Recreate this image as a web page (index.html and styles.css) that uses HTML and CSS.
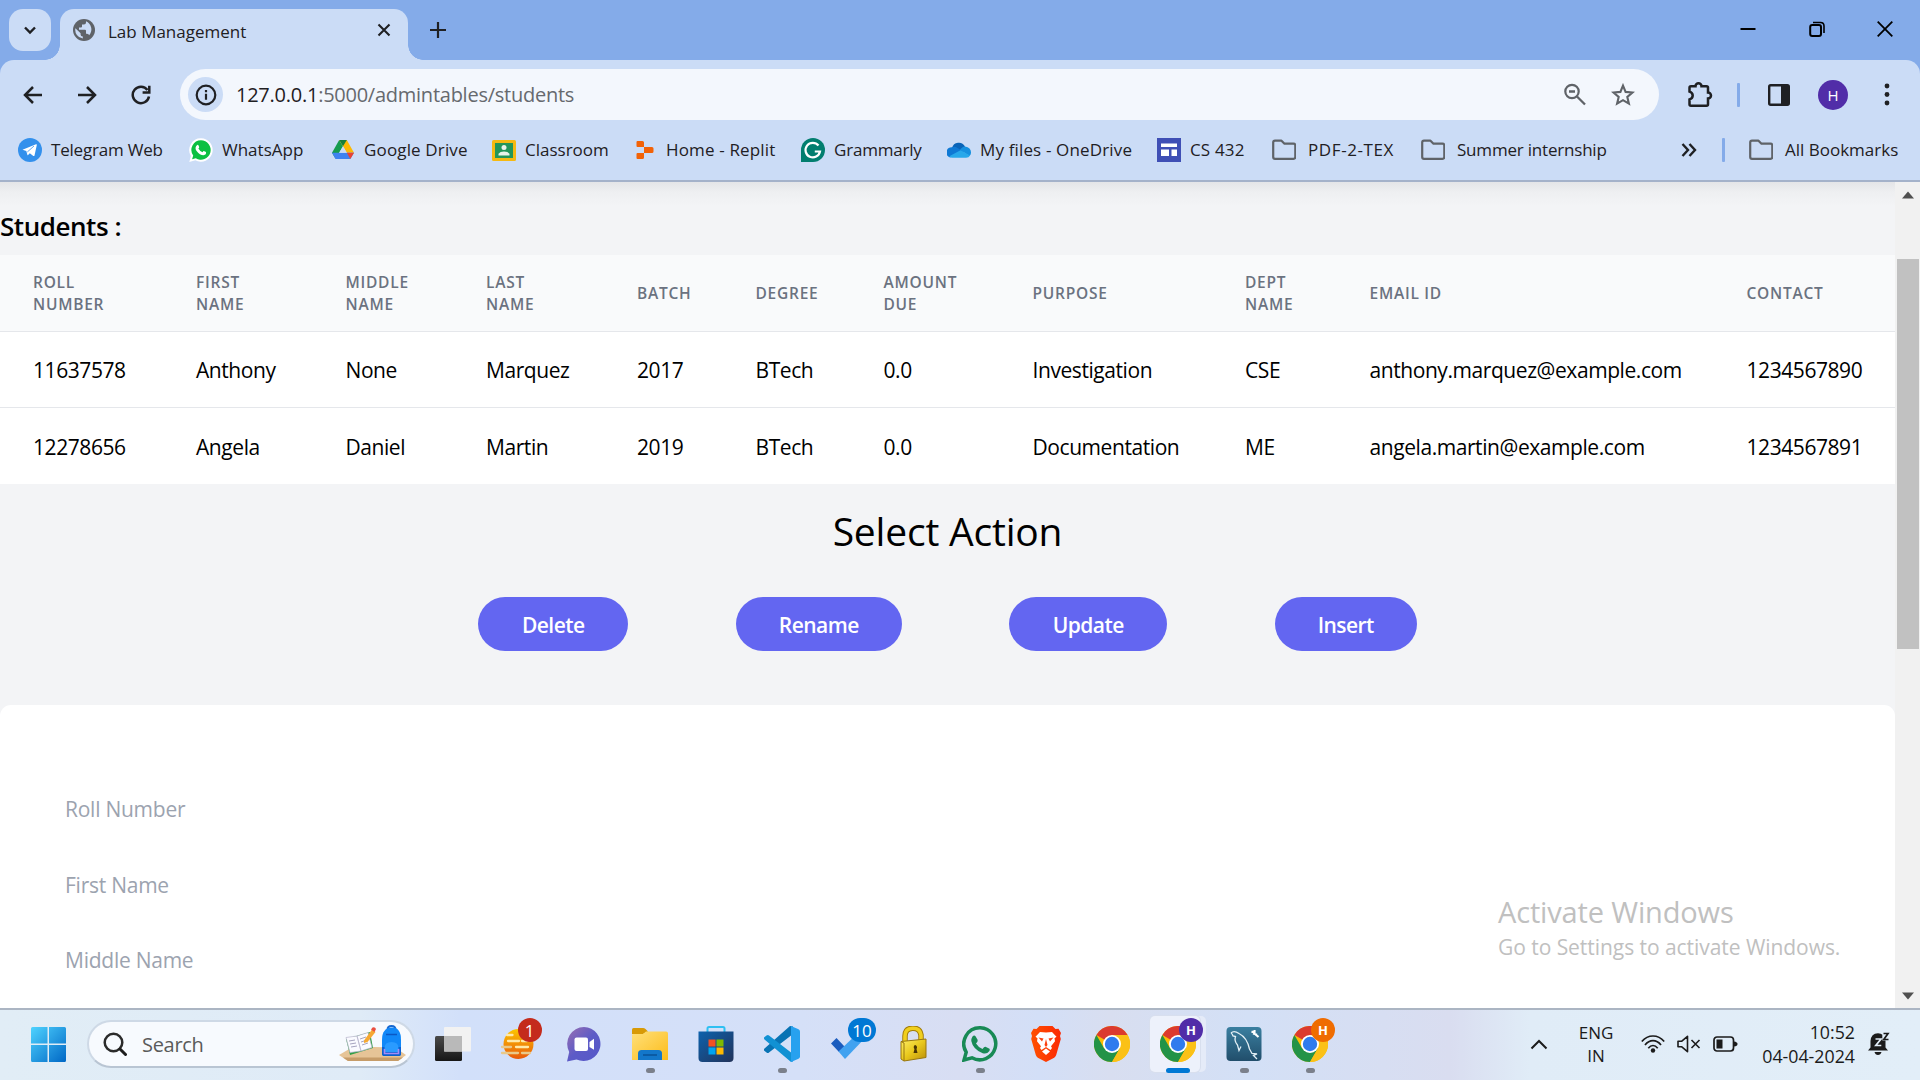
FILE: index.html
```html
<!DOCTYPE html>
<html lang="en">
<head>
<meta charset="utf-8">
<title>Lab Management</title>
<link rel="stylesheet" href="styles.css">
</head>
<body>
<svg class="defs" width="0" height="0">
  <defs>
    <linearGradient id="gWin" x1="0" y1="0" x2="1" y2="1"><stop offset="0" stop-color="#4fd3ff"/><stop offset="1" stop-color="#0067c5"/></linearGradient>
    <linearGradient id="gSun" x1="0" y1="0" x2="0" y2="1"><stop offset="0" stop-color="#fcc600"/><stop offset="1" stop-color="#e8590c"/></linearGradient>
    <linearGradient id="gChat" x1="0" y1="0" x2="1" y2="1"><stop offset="0" stop-color="#9a6fb0"/><stop offset=".5" stop-color="#5d5bc7"/><stop offset="1" stop-color="#5558c8"/></linearGradient>
    <linearGradient id="gFold" x1="0" y1="0" x2="1" y2="1"><stop offset="0" stop-color="#ffe07a"/><stop offset="1" stop-color="#fcbc1a"/></linearGradient>
    <linearGradient id="gStore" x1="0" y1="0" x2="1" y2="1"><stop offset="0" stop-color="#0d62ad"/><stop offset="1" stop-color="#22335a"/></linearGradient>
    <linearGradient id="gLock" x1="0" y1="0" x2="1" y2="1"><stop offset="0" stop-color="#fff06a"/><stop offset=".5" stop-color="#e9c81c"/><stop offset="1" stop-color="#b98d09"/></linearGradient>
    <linearGradient id="gBrave" x1="0" y1="0" x2="1" y2="0"><stop offset="0" stop-color="#ff5000"/><stop offset="1" stop-color="#fb2a05"/></linearGradient>
    <linearGradient id="gSql" x1="0" y1="0" x2="0" y2="1"><stop offset="0" stop-color="#3a7fa0"/><stop offset="1" stop-color="#214e6b"/></linearGradient>
    <linearGradient id="gDark" x1="0" y1="0" x2="0" y2="1"><stop offset="0" stop-color="#4a4a4a"/><stop offset="1" stop-color="#161616"/></linearGradient>
    <symbol id="folder" viewBox="0 0 24 24"><path d="M1.2 4.5q0-1.8 1.8-1.8h6.5l3 3h9q1.8 0 1.8 1.8v11.6q0 1.8-1.8 1.8H3q-1.8 0-1.8-1.8z" fill="none" stroke="#5f6368" stroke-width="2.2" stroke-linejoin="round"/></symbol>
    <symbol id="chrome" viewBox="0 0 36 36">
      <circle cx="18" cy="18" r="18" fill="#fbbc04"/>
      <path d="M18 18 2.4 9A18 18 0 0 1 33.6 9z" fill="#db3a2f"/>
      <path d="M2.4 9A18 18 0 0 0 18 36l7.8-13.500L18 18 10.200 22.500z" fill="#239347"/>
      <path d="M18 9h15.600A18 18 0 0 1 18 36l7.800-13.500z" fill="#fbc117"/>
      <circle cx="18" cy="18" r="9" fill="#fff"/><circle cx="18" cy="18" r="7.200" fill="#2f7bee"/>
    </symbol>
  </defs>
</svg>

<header class="tabs">
  <button class="tab-search"><svg width="16" height="16" viewBox="0 0 16 16"><path d="M3 5.500 8 10.500 13 5.500" fill="none" stroke="#1f2023" stroke-width="2.400"/></svg></button>
  <div class="tab">
    <svg width="22" height="22" viewBox="0 0 22 22"><circle cx="11" cy="11" r="11" fill="#5f6368"/><path d="M13 2.300v1.200q0 2-2 2H9v2q0 1-1 1H6v2.200h6q1 0 1 1v3h1q1.800 0 2.200 1.500A8.800 8.800 0 0 0 13 2.300zM2.400 9.200 7.600 14.300v1.100q0 2 2.200 2.200v2A8.900 8.900 0 0 1 2.400 9.200z" fill="#cbdcf6"/></svg>
    <span class="tab-title">Lab Management</span>
    <svg class="tab-close" width="14" height="14" viewBox="0 0 14 14"><path d="M1.500 1.500 12.500 12.500M12.500 1.500 1.500 12.500" stroke="#1f2023" stroke-width="2.100"/></svg>
  </div>
  <svg class="new-tab" width="18" height="18" viewBox="0 0 18 18"><path d="M9 1v16M1 9h16" stroke="#1f2023" stroke-width="2.200"/></svg>
  <div class="win-controls">
    <svg width="16" height="16" viewBox="0 0 16 16"><path d="M.5 8h15" stroke="#000" stroke-width="2"/></svg>
    <svg width="16" height="16" viewBox="0 0 16 16"><rect x="1.200" y="4" width="10.800" height="11" rx="2" fill="none" stroke="#000" stroke-width="2"/><path d="M4 1.500h7.500q3.500 0 3.500 3.500v7" fill="none" stroke="#000" stroke-width="1.600"/></svg>
    <svg width="16" height="16" viewBox="0 0 16 16"><path d="M.7.700 15.300 15.300M15.300.700.700 15.300" stroke="#000" stroke-width="1.800"/></svg>
  </div>
</header>

<nav class="toolbar">
  <div class="nav-buttons">
    <svg width="20" height="20" viewBox="0 0 20 20"><path d="M19 10H2.500M10 2 2 10l8 8" fill="none" stroke="#1f2023" stroke-width="2.500"/></svg>
    <svg width="20" height="20" viewBox="0 0 20 20"><path d="M1 10h16.500M10 2l8 8-8 8" fill="none" stroke="#1f2023" stroke-width="2.500"/></svg>
    <svg width="20" height="20" viewBox="0 0 20 20"><path d="M16.500 5A8.200 8.200 0 1 0 18 11.500" fill="none" stroke="#1f2023" stroke-width="2.500"/><path d="M18.300.800v6.700h-6.700" fill="none" stroke="#1f2023" stroke-width="2.500"/></svg>
  </div>
  <div class="omnibox">
    <span class="site-info"><svg width="22" height="22" viewBox="0 0 22 22"><circle cx="11" cy="11" r="9.300" fill="none" stroke="#1f2023" stroke-width="2.200"/><path d="M11 9.800v6M11 6v2.300" stroke="#1f2023" stroke-width="2.200"/></svg></span>
    <span class="url">127.0.0.1<span class="url-path">:5000/admintables/students</span></span>
    <svg class="zoom-icon" width="22" height="24" viewBox="0 0 22 24"><circle cx="8" cy="8.500" r="6.700" fill="none" stroke="#5f6368" stroke-width="2.200"/><path d="M13 13.500 21 21.500M5 8.500h6" stroke="#5f6368" stroke-width="2.300"/></svg>
    <svg width="24" height="24" viewBox="0 0 24 24"><path d="M12 2.600 14.600 8.900l6.900.6-5.200 4.500 1.600 6.700L12 17.200 6.100 20.700 7.700 14 2.500 9.500l6.900-.6z" fill="none" stroke="#5f6368" stroke-width="2.100"/></svg>
  </div>
  <div class="tools">
    <svg width="26" height="26" viewBox="0 0 26 26"><path d="M2.500 5.800q0-1.500 1.500-1.500h4.500a3 3 0 0 1 6 0H19.500q1.500 0 1.500 1.500v4.700a3 3 0 0 1 0 6v5.700q0 1.500-1.500 1.500H4q-1.500 0-1.500-1.500v-4.800q3.200-1 3.200-3.900t-3.200-3.900z" fill="none" stroke="#1f2023" stroke-width="2.500"/></svg>
    <i class="divider"></i>
    <svg width="22" height="22" viewBox="0 0 22 22"><rect x="1.200" y="1.200" width="19.600" height="19.600" rx="1.500" fill="none" stroke="#1f2023" stroke-width="2.400"/><path d="M13 1h8v20h-8z" fill="#1f2023"/></svg>
    <span class="avatar">H</span>
    <svg width="6" height="26" viewBox="0 0 6 26"><g fill="#1f2023"><circle cx="3" cy="4" r="2.400"/><circle cx="3" cy="12.500" r="2.400"/><circle cx="3" cy="21" r="2.400"/></g></svg>
  </div>
</nav>

<nav class="bookmarks">
  <a class="bm tight"><svg viewBox="0 0 24 24"><circle cx="12" cy="12" r="12" fill="#3390ec"/><path d="M4.500 11.800 18 6.200q1-.3.8.8l-2.300 10.500q-.3.900-1.200.4l-3.500-2.600-1.700 1.700q-.6.500-.8-.4L8.300 13z" fill="#fff"/><path d="M9.300 14 16 8" stroke="#3390ec" stroke-width=".8"/></svg><span>Telegram Web</span></a>
  <a class="bm"><svg viewBox="0 0 24 24"><path d="M12 .3a11.700 11.700 0 1 1-5.600 22L.3 23.900 1.900 18A11.700 11.700 0 0 1 12 .3z" fill="#fff"/><path d="M12 2.300a9.700 9.700 0 1 1-5.200 17.900L3.100 21.300l1.100-3.700A9.700 9.700 0 0 1 12 2.300z" fill="#0cc042"/><path d="M8.200 6.900q.8-.4 1.200.4l.8 1.800q.1.500-.8 1.500 1.400 2.700 4.100 3.700.9-1.200 1.300-1.300l2.200 1.100q.6 2.700-2.500 3.100-3.700 0-7.100-4.500-2.100-3.300.8-5.800z" fill="#fff"/></svg><span>WhatsApp</span></a>
  <a class="bm wide"><svg viewBox="0 0 24 24"><path d="M8.200 2 1 14.800l3.500 6L12 8.300z" fill="#169c4e"/><path d="M8.200 2h7.600L23 14.800h-7.200z" fill="#fcb903"/><path d="M8.200 2h7.600L12 8.300z" fill="#18803a"/><path d="M1 14.800h22l-3.700 6.300H4.600z" fill="#3f82f0"/><path d="M15.800 14.800H23l-3.700 6.300z" fill="#e94335"/><path d="M12 8.300 15.800 14.800H8.200z" fill="#cbdcf6"/></svg><span>Google Drive</span></a>
  <a class="bm"><svg viewBox="0 0 24 24"><rect x="0" y="2" width="24" height="21" rx="1.500" fill="#f5b912"/><rect x="3" y="5" width="18" height="15" fill="#23965a"/><g fill="#e8f3ea"><circle cx="12" cy="9.500" r="2.500"/><path d="M6.500 17.500v-1.700q1.500-2.300 5.500-2.300t5.500 2.300v1.700z"/></g></svg><span>Classroom</span></a>
  <a class="bm wide"><svg viewBox="0 0 24 24"><path d="M4.500 3h5q1.500 0 1.500 1.500V9H4.500Q3.500 9 3.500 8V4q0-1 1-1zM11 9h8q1.500 0 1.500 1.500v3q0 1.500-1.500 1.500h-8zM4.500 15H11v4.500Q11 21 9.500 21h-5q-1 0-1-1v-4q0-1 1-1z" fill="#f26207"/></svg><span>Home - Replit</span></a>
  <a class="bm tight"><svg viewBox="0 0 24 24"><path d="M12 0a12 12 0 1 1 0 24H0V12A12 12 0 0 1 12 0z" fill="#027e6f"/><path d="M17.500 7.500A7.300 7.300 0 1 0 19 13.500h-5.200" fill="none" stroke="#fff" stroke-width="2.200"/></svg><span>Grammarly</span></a>
  <a class="bm wide"><svg viewBox="0 0 24 24"><path d="M5 10A7 7 0 0 1 18 8.500L14 14z" fill="#0a64b8"/><path d="M5 9.200Q8 8.200 10.500 10L17 14 3 19.500A5.300 5.300 0 0 1 5 9.200z" fill="#0f79d4"/><path d="M18 8.500q6 .8 6 6 0 2-1.500 3.500L13 12q2-3.500 5-3.500z" fill="#1690df"/><path d="M13.500 12.200 23 17.500Q22 19.700 19 19.700H5.300q-1.700 0-3-1.500z" fill="#28a8ea"/></svg><span>My files - OneDrive</span></a>
  <a class="bm wide"><svg viewBox="0 0 24 24"><path d="M0 0h24v24H0z" fill="#3f4fb5"/><path d="M4 5.500h16V9H4zM4 11.500h8V18H4zM14.500 11.500H20V18h-5.500z" fill="#fff"/></svg><span>CS 432</span></a>
  <a class="bm dir caps"><svg><use href="#folder"/></svg><span>PDF-2-TEX</span></a>
  <a class="bm dir tight"><svg><use href="#folder"/></svg><span>Summer internship</span></a>
  <span class="more"><svg width="16" height="16" viewBox="0 0 16 16"><path d="M1.500 2 7 8l-5.500 6M8.500 2 14 8l-5.500 6" fill="none" stroke="#1f2023" stroke-width="2.400"/></svg></span>
  <i class="divider"></i>
  <a class="bm dir"><svg><use href="#folder"/></svg><span>All Bookmarks</span></a>
</nav>

<div class="viewport">
  <main class="page">
    <h2 class="title">Students :</h2>
    <table class="students">
      <colgroup><col class="c1"><col class="c2"><col class="c3"><col class="c4"><col class="c5"><col class="c6"><col class="c7"><col class="c8"><col class="c9"><col class="c10"><col class="c11"></colgroup>
      <thead>
        <tr><th>Roll<br>Number</th><th>First<br>Name</th><th>Middle<br>Name</th><th>Last<br>Name</th><th>Batch</th><th>Degree</th><th>Amount<br>Due</th><th>Purpose</th><th>Dept<br>Name</th><th>Email ID</th><th>Contact</th></tr>
      </thead>
      <tbody>
        <tr><td>11637578</td><td>Anthony</td><td>None</td><td>Marquez</td><td>2017</td><td>BTech</td><td>0.0</td><td>Investigation</td><td>CSE</td><td>anthony.marquez@example.com</td><td>1234567890</td></tr>
        <tr><td>12278656</td><td>Angela</td><td>Daniel</td><td>Martin</td><td>2019</td><td>BTech</td><td>0.0</td><td>Documentation</td><td>ME</td><td>angela.martin@example.com</td><td>1234567891</td></tr>
      </tbody>
    </table>
    <h1 class="heading">Select Action</h1>
    <div class="actions">
      <button class="action delete">Delete</button>
      <button class="action rename">Rename</button>
      <button class="action update">Update</button>
      <button class="action insert">Insert</button>
    </div>
    <form class="card">
      <div class="field">Roll Number</div>
      <div class="field">First Name</div>
      <div class="field">Middle Name</div>
    </form>
  </main>
  <div class="scrollbar">
    <svg width="12" height="8" viewBox="0 0 12 8"><path d="M0 7.500 6 .5 12 7.500z" fill="#505050"/></svg>
    <div class="thumb"></div>
    <svg width="12" height="8" viewBox="0 0 12 8"><path d="M0 .5 6 7.500 12 .5z" fill="#505050"/></svg>
  </div>
  <div class="watermark"><p class="wm-title">Activate Windows</p><p class="wm-text">Go to Settings to activate Windows.</p></div>
</div>

<footer class="taskbar">
  <svg class="start" width="35" height="35" viewBox="0 0 35 35"><path d="M1.500 0H16.500V16.500H0V1.500Q0 0 1.500 0zM18 0H33.500Q35 0 35 1.500V16.500H18zM0 18H16.500V35H1.500Q0 35 0 33.500zM18 18H35V33.500Q35 35 33.500 35H18z" fill="url(#gWin)"/></svg>
  <div class="search">
    <svg width="24" height="24" viewBox="0 0 24 24"><circle cx="10.500" cy="10.500" r="8.800" fill="none" stroke="#2b2b2b" stroke-width="2.500"/><path d="M17 17 22.500 22.500" stroke="#1d1d1d" stroke-width="3" stroke-linecap="round"/></svg>
    <span class="search-text">Search</span>
    <svg class="art" width="68" height="38" viewBox="0 0 68 38"><path d="M0 30 12 23q22-2 45 0l10 7-8 6H9z" fill="#e6c497"/><path d="M4 32.500 9 36h50l5-3.500z" fill="#c69c69"/><path d="M7 14 31 7l3 16L11 30z" fill="#2f9e46"/><path d="M7 12.500 18 11 22 26 11 27.500zM18 11 29 7.500 33 22.500 22 26z" fill="#fafaff" stroke="#b7b4cc" stroke-width=".7"/><path d="M10 16l6-1M11 19l6-1M12 22l6-1M21 14l6-2M22 17l6-2M23 20l6-2" stroke="#9c9ab8" stroke-width=".9"/><path d="M25 15.500 33 4.500 36.500 7 28.500 17 25 18z" fill="#f6a832"/><path d="M32 4.500 33.500 2.500Q36 1.500 37 4L35.500 7z" fill="#ea4f3f"/><path d="M48.500 5q0-4 4-4t4 4" fill="none" stroke="#1868d0" stroke-width="2"/><path d="M43 15Q43 3 52.500 2.500T62 15V29Q62 31 59 31H46q-3 0-3-2z" fill="#1188f8"/><path d="M43 22v7q0 2 3 2h13q3 0 3-2v-7z" fill="#0c5fd0"/><path d="M45.500 23q0-6 7-6t7 6v4h-14z" fill="#2a9bff"/><path d="M45.500 24v4.500h14V24" fill="none" stroke="#a48bf5" stroke-width="1.600"/><path d="M47 9.500h11" stroke="#0b58c5" stroke-width="1.500"/></svg>
  </div>
  <div class="apps">
    <div class="app"><svg width="38" height="36" viewBox="0 0 38 36"><rect x="2" y="10" width="27" height="25" rx="1.500" fill="url(#gDark)"/><rect x="11" y="1" width="27" height="24.500" rx="1" fill="#f2f2f2"/><path d="M11 10H29V25.500H11z" fill="#b9b9b9"/></svg></div>
    <div class="app"><svg width="36" height="36" viewBox="0 0 36 36"><circle cx="18.500" cy="18" r="15" fill="url(#gSun)"/><path d="M7 9h5.500M8 15H19M22 15h5M16 21H28" stroke="#ffe9a8" stroke-width="2.300" stroke-linecap="round"/><path d="M2 21h9M2 27H18M22 27h8" stroke="#e9c98a" stroke-width="2.300" stroke-linecap="round"/></svg><b class="badge red">1</b></div>
    <div class="app"><svg width="36" height="36" viewBox="0 0 36 36"><path d="M18 1A17 17 0 1 1 10.500 33.500L1 35.500 3.200 26A17 17 0 0 1 18 1z" fill="url(#gChat)"/><rect x="8.500" y="11.500" width="13.500" height="13.500" rx="2" fill="#fff"/><path d="M23.500 16 28 12.800v11L23.500 21z" fill="#fff"/></svg></div>
    <div class="app"><svg width="36" height="36" viewBox="0 0 36 36"><path d="M0 8V3.500Q0 2 1.500 2H11q1.500 0 2.500 1L16 5.500 11 8z" fill="#d89a06"/><path d="M0 9q0-1 1-1h10l3-2.500h20q2 0 2 2V34H0z" fill="url(#gFold)"/><path d="M6 34V27.500Q6 24 9.500 24h17q3.500 0 3.500 3.500V34z" fill="#1377ca"/><path d="M11 29h14" stroke="#0b559b" stroke-width="1.600"/></svg><i class="run"></i></div>
    <div class="app"><svg width="36" height="36" viewBox="0 0 36 36"><path d="M9.500 7V2.500Q9.500 1 11 1H25q1.500 0 1.500 1.500V7" fill="none" stroke="#2fc0f2" stroke-width="2"/><path d="M.5 5.500h35V32q0 4-4 4H4.500q-4 0-4-4z" fill="url(#gStore)"/><path d="M10.500 13.500h7v7h-7z" fill="#f25022"/><path d="M18.500 13.500h7v7h-7z" fill="#7fba00"/><path d="M10.500 21.500h7v7h-7z" fill="#00a4ef"/><path d="M18.500 21.500h7v7h-7z" fill="#ffb900"/></svg></div>
    <div class="app"><svg width="36" height="36" viewBox="0 0 36 36"><path d="M0 24.500 2.500 26.500Q4 27.500 5 26.500L29 8V.5L26 0 .5 22.500q-1 1-.5 2z" fill="#0873b4"/><path d="M0 11.500 2.500 9.500Q4 8.500 5 9.500L29 28v7.500L27 36 .5 13.500q-1-1-.5-2z" fill="#1191d3"/><path d="M27 0 34.500 3.200q1.500.8 1.500 2.300v25q0 1.500-1.500 2.300L27 36V0z" fill="#27a1ef"/></svg><i class="run"></i></div>
    <div class="app"><svg width="36" height="36" viewBox="0 0 36 36"><path d="M1 17.500 6.500 12 14.500 20.500 9 26z" fill="#1b5cbe"/><path d="M8.500 25.500 30.500 4.500 36 11 15 33z" fill="#41a2f0"/></svg><b class="badge blue">10</b></div>
    <div class="app"><svg width="36" height="36" viewBox="0 0 36 36"><path d="M9 17V10Q9 2.500 16.500 2.200T25 9v8" fill="none" stroke="#a27c0a" stroke-width="5.500"/><path d="M9 17V10Q9 2.500 16.500 2.200T25 9v8" fill="none" stroke="#f0cf1e" stroke-width="3.600"/><path d="M5 15.500 30 13V31.500L8 35 5 33z" fill="url(#gLock)" stroke="#99770e"/><path d="M5 15.500 8 17V35" fill="none" stroke="#99770e"/><path d="M19 19a2.500 2.500 0 0 1 1.500 4l1 4h-4l1-4a2.500 2.500 0 0 1 .5-4z" fill="#4a3505"/></svg></div>
    <div class="app"><svg width="36" height="36" viewBox="0 0 36 36"><path d="M18.300 1.800A16 16 0 1 1 10 31.800L2 34 4.200 26.200A16 16 0 0 1 18.300 1.800z" fill="none" stroke="#188a55" stroke-width="3.500"/><path d="M10.500 10.500q1.700-2 3.200 0l2 3.500q.3 1.500-1.700 3.500 2.300 3.800 6.500 5.500 1.800-2.500 3-2.200l4 2q.8 1-.3 2.500-2.200 3-6.500 1.900Q11 23.500 9.300 15q0-2.700 1.200-4.500z" fill="#188a55"/></svg><i class="run"></i></div>
    <div class="app"><svg width="30" height="36" viewBox="0 0 30 36"><path d="M8.500 0h13l3 3 3-.2L30 7l-1 3 .8 3-4.600 16q-.6 1.800-2 2.800L15 36l-8.200-4.200q-1.400-1-2-2.800L.2 13 1 10 0 7l2.500-4.200 3 .2z" fill="url(#gBrave)"/><path d="M15 6.500 21 6l4.500 4.700-2 1.500.5 3-4 5 1 1.700-1.500 2-4.500-3-4.500 3L9 21.900l1-1.700-4-5 .5-3-2-1.500L9 6z" fill="#fff"/><path d="M7.500 11.500 12.500 12.500 11 15.500zM22.500 11.500 17.500 12.500 19 15.500zM15 13l1.500 6L15 21l-1.500-2zM10 17l3 3M20 17l-3 3" fill="#fb4010"/><path d="M15 22.500 19 25.500 15 29 11 25.500z" fill="#fff"/></svg></div>
    <div class="app"><svg width="36" height="36"><use href="#chrome"/></svg></div>
    <div class="app active"><i class="stack"></i><svg width="36" height="36"><use href="#chrome"/></svg><b class="badge purple">H</b><i class="run"></i></div>
    <div class="app"><svg width="36" height="36" viewBox="0 0 36 36"><rect x=".5" y="1" width="35" height="34" rx="4" fill="url(#gSql)"/><path d="M5 7Q8 4 13 7.500q8 4 10.500 15.500l2.500 4.500 5 .5-3.500 1.500 3.500 3.500M5 7q1.500 1 2 3l2.500.5Q8 15 11.500 19l1.500 5.500 2-4" fill="none" stroke="#e2eff5" stroke-width="1.300"/><path d="M25.500 5.500 28 6.500M28.500 4v3.500L32.500 11M27 7.500l4 1" fill="none" stroke="#fff" stroke-width="2.200"/></svg><i class="run"></i></div>
    <div class="app"><svg width="36" height="36"><use href="#chrome"/></svg><b class="badge orange">H</b><i class="run"></i></div>
  </div>
  <div class="tray">
    <svg width="18" height="12" viewBox="0 0 18 12"><path d="M1.500 10.500 9 3l7.500 7.500" fill="none" stroke="#1b1b1b" stroke-width="2"/></svg>
    <div class="lang"><span>ENG</span><span>IN</span></div>
    <svg class="wifi" width="24" height="20" viewBox="0 0 24 20"><g fill="none" stroke="#1b1b1b" stroke-width="1.700"><path d="M.8 7.500Q5.500 2 12 2t11.200 5.500" /><path d="M4 11q3.500-4.300 8-4.300t8 4.300"/><path d="M7.300 14.300Q9.500 11.500 12 11.500t4.700 2.800"/></g><circle cx="12" cy="16.500" r="2.200" fill="#1b1b1b"/></svg>
    <svg class="vol" width="24" height="18" viewBox="0 0 24 18"><path d="M1 6.200h3.800L10.500 1.300v15.400L4.800 11.800H1z" fill="none" stroke="#1b1b1b" stroke-width="1.600" stroke-linejoin="round"/><path d="M14.500 5 22.500 13M22.500 5 14.500 13" stroke="#1b1b1b" stroke-width="1.600"/></svg>
    <svg class="bat" width="25" height="16" viewBox="0 0 25 16"><rect x="1" y="1" width="19.500" height="14" rx="3" fill="none" stroke="#1b1b1b" stroke-width="1.700"/><path d="M3.500 3.500h6v9h-6z" fill="#1b1b1b"/><path d="M21 5.500q3.500.5 3.500 2.500T21 10.500z" fill="#1b1b1b"/></svg>
    <div class="clock"><span>10:52</span><span>04-04-2024</span></div>
    <svg class="bell" width="22" height="24" viewBox="0 0 22 24"><path d="M0 18.500 2.500 15.500V9Q3 1.500 10 1.200q3.200 0 4.300 1.500V8.500h3.200v7L20 18.500zM6.500 20h7q-.8 3-3.500 3t-3.500-3z" fill="#1b1b1b"/><path d="M7.500 7h5.500L7.800 13.500h5.500" fill="none" stroke="#e2edf7" stroke-width="1.700"/><path d="M15.500 1.500h4.500L15.800 7.500H20.500" fill="none" stroke="#1b1b1b" stroke-width="1.700"/></svg>
  </div>
</footer>
</body>
</html>
```
FILE: styles.css
```css
* { box-sizing: border-box; }
body { margin: 0; width: 1920px; height: 1080px; overflow: hidden; display: flex; flex-direction: column; font-family: "Open Sans", "Noto Sans", sans-serif; color: #000; background: linear-gradient(#84abe9 100px, #fff 100px); }
svg { display: block; flex: none; }
.defs { position: absolute; }
h1, h2, p { margin: 0; font-weight: 400; }
button { border: 0; font: inherit; padding: 0; }

/* tab strip */
.tabs { height: 60px; flex: none; background: #84abe9; display: flex; align-items: flex-start; padding: 9px 27px 0 9px; }
.tab-search { width: 42px; height: 42px; border-radius: 14px; background: #cbdcf6; display: grid; place-items: center; margin-right: 9px; }
.tab { position: relative; width: 348px; height: 51px; border-radius: 14px 14px 0 0; background: #cbdcf6; display: flex; align-items: center; padding: 0 17px 9px 13px; }
.tab::before, .tab::after { content: ""; position: absolute; bottom: 0; width: 15px; height: 15px; }
.tab::before { left: -15px; background: radial-gradient(circle at 0 0, transparent 14.5px, #cbdcf6 15px); }
.tab::after { right: -15px; background: radial-gradient(circle at 100% 0, transparent 14.5px, #cbdcf6 15px); }
.tab-title { margin-left: 13px; font-size: 17px; color: #1f2023; padding-top: 2px; }
.tab-close { margin-left: auto; }
.new-tab { margin: 12px 0 0 21px; }
.win-controls { margin-left: auto; display: flex; gap: 52.5px; padding-top: 12px; }

/* toolbar */
.toolbar { height: 60px; flex: none; display: flex; align-items: center; padding: 9px 30px 0 23px; border-radius: 14px 14px 0 0; background: #cbdcf6; }
.nav-buttons { display: flex; gap: 34px; width: 157px; }
.omnibox { width: 1479px; height: 51px; border-radius: 26px; background: #f3f7fd; display: flex; align-items: center; padding: 0 24px 0 8px; }
.site-info { width: 35px; height: 35px; border-radius: 50%; background: #cbdcf6; display: grid; place-items: center; margin-right: 13px; }
.url { font-size: 20px; letter-spacing: -.25px; color: #1f2023; }
.url-path { color: #66696e; }
.zoom-icon { margin: 0 25px 0 auto; }
.tools { display: flex; align-items: center; margin-left: 28px; }
.tools .divider { margin: 0 28px 0 24px; }
.avatar { width: 30px; height: 30px; margin: 0 36px 0 28px; border-radius: 50%; background: #512da8; color: #fff; font-size: 15px; display: grid; place-items: center; }
.divider { width: 3px; height: 24px; background: #84abe9; border-radius: 1px; }

.bookmarks { height: 62px; flex: none; background: #cbdcf6; border-bottom: 2px solid #a4b2ca; display: grid; align-items: center; grid-template-columns: 171px 142px 161px 141px 168px 146px 210px 115px 149px 260px 41px 27px 170px; padding-left: 18px; font-size: 17px; color: #1f2023; white-space: nowrap; }
.bm { display: flex; align-items: center; gap: 9px; }
.bm span { position: relative; top: -1px; }
.bm svg { width: 24px; height: 24px; }
.bm.dir { gap: 12px; }
.tight { letter-spacing: -.2px; }
.wide { letter-spacing: .15px; }
.caps { letter-spacing: .6px; }

/* page */
.viewport { position: relative; height: 826px; flex: none; display: flex; background: #f3f4f6; }
.page { width: 1895px; height: 826px; overflow: hidden; background: linear-gradient(#e4e5e8, #eeeff1 10px, #f3f4f6 24px); }
.title { height: 73px; padding-top: 24px; line-height: 40px; font-size: 26px; font-weight: 600; letter-spacing: -.45px; }
.students { width: 1895px; table-layout: fixed; border-collapse: separate; border-spacing: 0; background: #fff; }
.students th, .students td { padding: 0 0 0 33px; text-align: left; white-space: nowrap; }
.students th { height: 77px; border-bottom: 1px solid #e5e7eb; background: #f9fafb; font-size: 15.5px; line-height: 22px; font-weight: 600; letter-spacing: .75px; text-transform: uppercase; color: #6b7280; }
.students td { height: 76px; font-size: 21px; letter-spacing: -.43px; }
.students tr:first-child td { border-bottom: 1px solid #e5e7eb; }
.students tr:last-child td { padding-top: 2px; }
.c1 { width: 163px; } .c2 { width: 149.5px; } .c3 { width: 140.5px; } .c4 { width: 151px; } .c5 { width: 118.5px; } .c6 { width: 128px; } .c7 { width: 149px; } .c8 { width: 212.5px; } .c9 { width: 124.5px; } .c10 { width: 377px; } .c11 { width: 181.5px; }
.heading { height: 113px; padding-top: 22px; line-height: 50px; font-size: 39px; letter-spacing: -.2px; text-align: center; }
.actions { display: flex; justify-content: center; gap: 107.5px; }
.action { height: 54px; padding-top: 1px; border-radius: 27px; background: #6366f1; color: #fff; font-size: 21px; font-weight: 600; letter-spacing: -.55px; }
.delete { width: 150px; } .rename { width: 166px; } .update { width: 158px; } .insert { width: 142px; }
.card { margin-top: 54px; height: 320px; border-radius: 11px; background: #fff; padding: 67px 65px 0; }
.field { height: 75.5px; line-height: 75.5px; font-size: 21px; letter-spacing: -.25px; color: #9ca3af; }
.scrollbar { width: 25px; background: #f1f1f1; display: flex; flex-direction: column; align-items: center; padding: 9px 0 8px; }
.thumb { width: 22px; height: 390px; margin: 60px 0 auto; background: #c1c1c1; }
.watermark { position: absolute; left: 1498px; top: 710px; color: #c0c0c0; white-space: nowrap; }
.wm-title { font-size: 29px; line-height: 40px; letter-spacing: -.15px; }
.wm-text { font-size: 21px; line-height: 30px; letter-spacing: -.05px; }

/* taskbar */
.taskbar { height: 72px; flex: none; border-top: 2px solid #abb5c3; display: flex; align-items: center; padding: 0 30px 2px 31px; background: linear-gradient(90deg, #e1edf6 0, #dfebf7 360px, #d2e0fa 460px, #d5e0f8 800px, #d8def3 960px, #d3dff7 1040px, #d8def0 1110px, #d3e0f6 1250px, #d9ddf0 1450px, #e0ecf7 1530px, #e2eef8 1920px); }
.search { margin-left: 21px; width: 328px; height: 48px; border: 2px solid #ced9e6; border-bottom-color: #b9c5d3; border-radius: 24px; background: #f7fafe; display: flex; align-items: center; padding: 0 6px 0 14px; }
.search-text { margin-left: 15px; font-size: 20px; letter-spacing: -.3px; color: #5a5a5a; }
.art { margin-left: auto; }
.apps { display: flex; margin-left: 4px; }
.app { position: relative; width: 66px; height: 68px; display: grid; place-items: center; }
.badge { position: absolute; left: 32.5px; top: 8px; width: 24px; height: 24px; border-radius: 50%; display: grid; place-items: center; color: #fff; font-weight: 400; font-size: 17px; }
.red { background: #c42b1c; }
.blue { left: 33px; width: 28px; border-radius: 12px; background: #0078d4; }
.purple, .orange { left: 34px; font-weight: 700; font-size: 13px; }
.purple { background: #512da8; }
.orange { background: #ef6c00; }
.run { position: absolute; left: 28.5px; bottom: 5px; width: 9px; height: 5px; border-radius: 3px; background: #7b808b; }
.active::before { content: ""; position: absolute; left: 5px; top: 6px; width: 50px; height: 56px; border-radius: 5px; background: #edf1fb; z-index: 1; box-shadow: 0 0 0 1px #d8dfee; }
.active svg, .active .badge, .active .run { z-index: 2; }
.active svg { position: relative; }
.stack { position: absolute; left: 45px; top: 6px; width: 16px; height: 56px; border-radius: 5px; background: #e5ebf8; }
.active .run { left: 21px; width: 24px; background: #0078d4; }
.tray { display: flex; align-items: center; margin-left: auto; color: #1b1b1b; font-size: 17px; line-height: 24px; }
.lang { display: flex; flex-direction: column; align-items: center; width: 40px; margin-left: 28px; line-height: 23px; }
.wifi { margin-left: 25px; }
.vol, .bat { margin-left: 12px; }
.clock { display: flex; flex-direction: column; align-items: flex-end; width: 117px; font-size: 17.8px; }
.bell { margin-left: 13px; }
```
